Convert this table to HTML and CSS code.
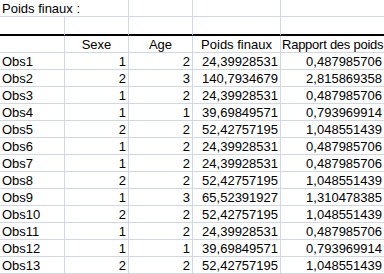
FILE: index.html
```html
<!DOCTYPE html>
<html lang="fr">
<head>
    <meta charset="UTF-8">
    <title>Poids finaux</title>
    <link rel="stylesheet" href="styles.css">
</head>
<body>
    <table class="sheet">
        <colgroup>
            <col class="col-a">
            <col class="col-b">
            <col class="col-c">
            <col class="col-d">
            <col class="col-e">
        </colgroup>
        <tr class="title-row">
            <td colspan="2" class="label">Poids finaux :</td>
            <td></td><td></td><td></td>
        </tr>
        <tr class="blank-row">
            <td></td><td></td><td></td><td></td><td></td>
        </tr>
        <tr class="head-row">
            <td></td>
            <td class="center">Sexe</td>
            <td class="center">Age</td>
            <td class="center">Poids finaux</td>
            <td class="label">Rapport des poids</td>
        </tr>
        <tr><td class="label">Obs1</td><td class="num">1</td><td class="num">2</td><td class="num">24,39928531</td><td class="num">0,487985706</td></tr>
        <tr><td class="label">Obs2</td><td class="num">2</td><td class="num">3</td><td class="num">140,7934679</td><td class="num">2,815869358</td></tr>
        <tr><td class="label">Obs3</td><td class="num">1</td><td class="num">2</td><td class="num">24,39928531</td><td class="num">0,487985706</td></tr>
        <tr><td class="label">Obs4</td><td class="num">1</td><td class="num">1</td><td class="num">39,69849571</td><td class="num">0,793969914</td></tr>
        <tr><td class="label">Obs5</td><td class="num">2</td><td class="num">2</td><td class="num">52,42757195</td><td class="num">1,048551439</td></tr>
        <tr><td class="label">Obs6</td><td class="num">1</td><td class="num">2</td><td class="num">24,39928531</td><td class="num">0,487985706</td></tr>
        <tr><td class="label">Obs7</td><td class="num">1</td><td class="num">2</td><td class="num">24,39928531</td><td class="num">0,487985706</td></tr>
        <tr><td class="label">Obs8</td><td class="num">2</td><td class="num">2</td><td class="num">52,42757195</td><td class="num">1,048551439</td></tr>
        <tr><td class="label">Obs9</td><td class="num">1</td><td class="num">3</td><td class="num">65,52391927</td><td class="num">1,310478385</td></tr>
        <tr><td class="label">Obs10</td><td class="num">2</td><td class="num">2</td><td class="num">52,42757195</td><td class="num">1,048551439</td></tr>
        <tr><td class="label">Obs11</td><td class="num">1</td><td class="num">2</td><td class="num">24,39928531</td><td class="num">0,487985706</td></tr>
        <tr><td class="label">Obs12</td><td class="num">1</td><td class="num">1</td><td class="num">39,69849571</td><td class="num">0,793969914</td></tr>
        <tr><td class="label">Obs13</td><td class="num">2</td><td class="num">2</td><td class="num">52,42757195</td><td class="num">1,048551439</td></tr>
    </table>
</body>
</html>
```

FILE: styles.css
```css
html, body {
    margin: 0;
    padding: 0;
    background: #ffffff;
    overflow: hidden;
}

body {
    width: 384px;
    height: 274px;
    font-family: "Liberation Sans", Arial, sans-serif;
    font-size: 13px;
    color: #000000;
}

/* Spreadsheet grid */
.sheet {
    border-collapse: separate;
    border-spacing: 0;
    table-layout: fixed;
    width: 385px;
}

.col-a { width: 65px; }
.col-b { width: 64px; }
.col-c { width: 64px; }
.col-d { width: 88px; }
.col-e { width: 104px; }

.sheet td {
    box-sizing: border-box;
    padding: 1px 0 0 0;
    height: 17px;
    line-height: 15px;
    white-space: nowrap;
    border-right: 1px solid #d0d7e5;
    border-bottom: 1px solid #d0d7e5;
}

.sheet .blank-row td {
    height: 19px;
    line-height: 16px;
    border-bottom: 2px solid #000000;
}

.label {
    text-align: left;
    padding-left: 2px !important;
}

/* last header is wider than its column, squeeze it a bit */
.head-row .label {
    padding-left: 1px !important;
    letter-spacing: -0.25px;
}

.center {
    text-align: center;
}

.num {
    text-align: right;
    padding-right: 2px !important;
}
```
